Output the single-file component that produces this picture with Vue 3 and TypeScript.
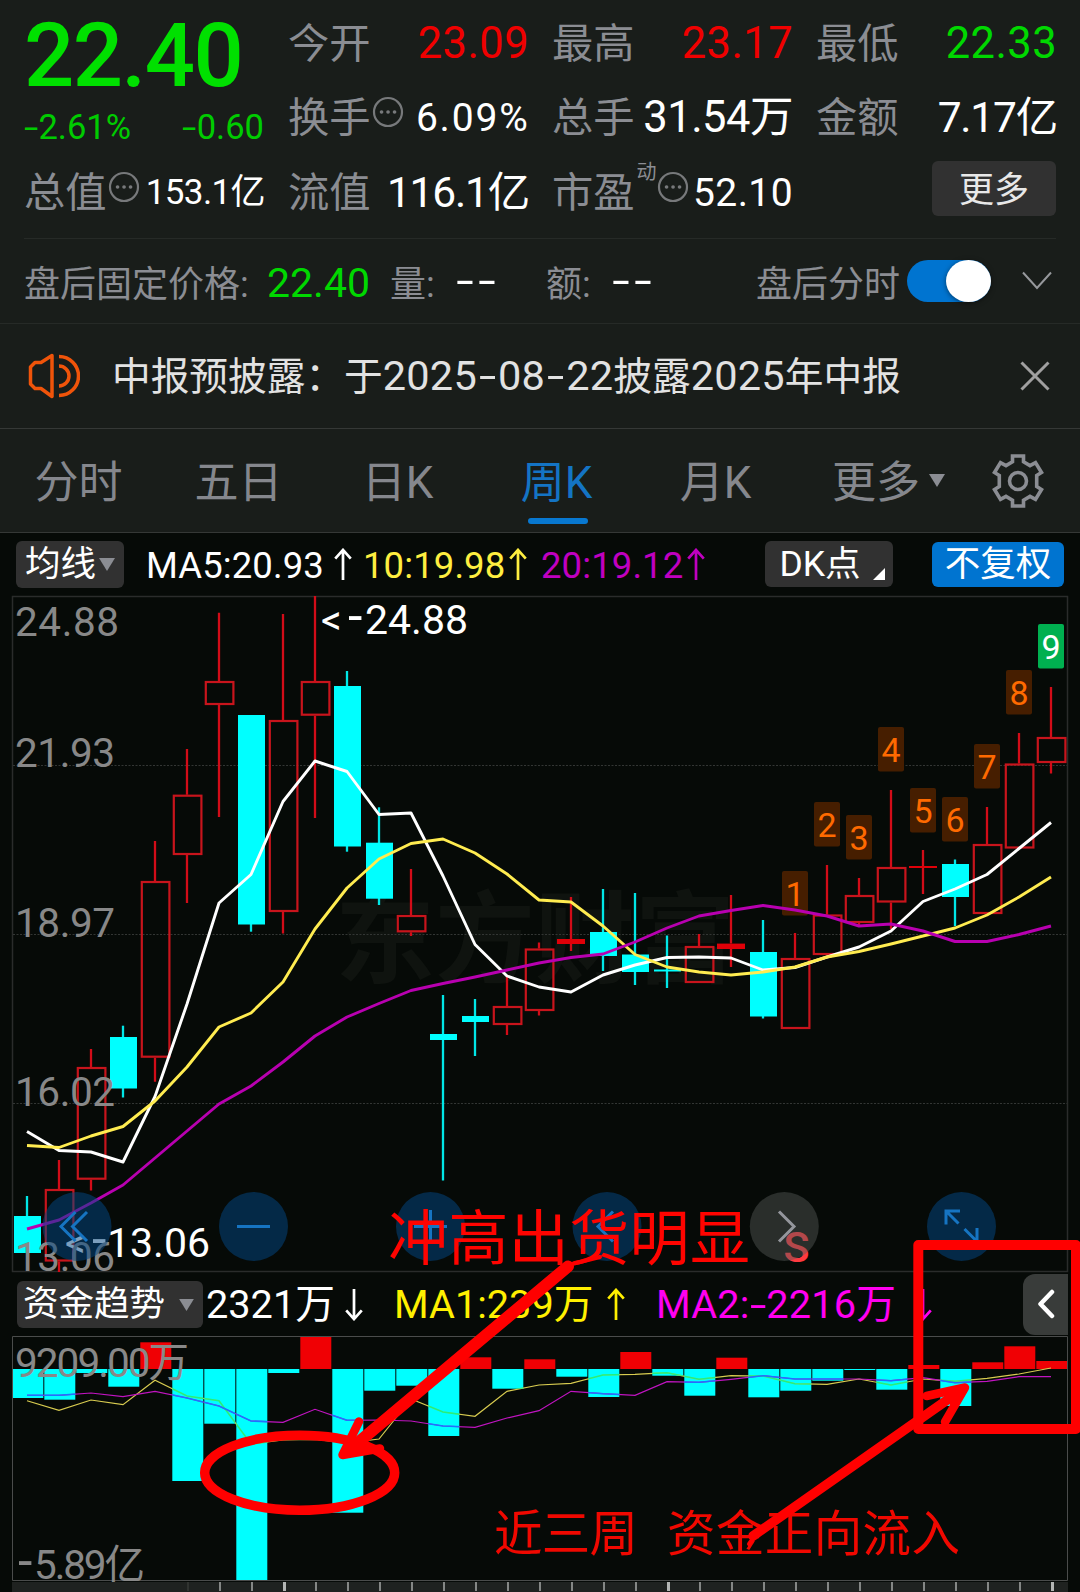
<script setup lang="ts">
interface Candle { up: boolean; high: number; top: number; bottom: number; low: number }

const cx = (i: number): number => 27 + 32 * i

const raw: [number, number, number, number, number][] = [
  [0, 1196, 1216, 1253, 1253], [1, 1160, 1189, 1261.5, 1272], [1, 1049, 1067, 1179.7, 1190.5],
  [0, 1025.7, 1037, 1088.5, 1097.5], [1, 841, 881, 1057.7, 1081.7], [1, 749, 794.7, 855, 903],
  [1, 612.7, 681, 705, 817], [0, 715, 715, 924.5, 931.7], [1, 614, 720, 912, 933.5],
  [1, 596, 681, 715.7, 818], [0, 671, 686, 846.5, 851.7], [0, 807.3, 842.7, 898.7, 905],
  [1, 869, 915, 932.3, 936], [0, 995, 1034, 1040, 1180.5], [0, 999, 1016, 1022, 1056],
  [1, 977, 1006, 1025, 1035], [1, 942.5, 948.5, 1011, 1015.5], [1, 897, 939, 944, 951],
  [0, 889, 932, 956, 971], [0, 893, 954.5, 972, 985], [0, 935.5, 969.5, 971.5, 988],
  [1, 934, 946, 983, 983], [1, 895, 943.6, 949, 967], [0, 920, 952, 1016.5, 1018.5],
  [1, 933, 958, 1029, 1029], [1, 865, 914.5, 955, 955], [1, 878, 895, 923, 925],
  [1, 790, 867, 902.5, 929], [1, 850, 866, 868, 894], [0, 859.5, 864, 897, 926],
  [1, 807, 844, 914, 914], [1, 733, 763.5, 848.5, 848.5], [1, 687, 737, 763, 773.5],
]
const candles: Candle[] = raw.map(([u, high, top, bottom, low]) => ({ up: u === 1, high, top, bottom, low }))

const toPoints = (ys: number[]): string => ys.map((y, i) => `${cx(i)},${y}`).join(' ')
const ma5 = toPoints([1131.5, 1150.5, 1152, 1162, 1096.5, 1004, 903, 874.5, 801.5, 761, 771.5, 814.5, 813, 876, 944.5, 976, 987, 992, 975, 965, 957.5, 957, 958, 970, 967.5, 957, 947, 931, 901.5, 889, 874.5, 848.5, 822.5])
const ma10 = toPoints([1145.5, 1147.5, 1136, 1126.5, 1101, 1067, 1027, 1013, 982, 929, 888, 859, 843.5, 839, 853, 874, 900, 902, 926, 954.5, 967, 972, 975, 972, 967, 957, 951.5, 944, 936, 928, 915, 897, 877])
const ma20 = toPoints([1229, 1220, 1203, 1185, 1158, 1131, 1104, 1086, 1062, 1036, 1017, 1003.5, 990.5, 983.5, 977, 970, 963, 957.5, 954, 942, 928, 916, 910.5, 905.5, 910, 916, 926, 924, 931, 941.5, 941.5, 934.5, 926])

const zero = 1369
const flows = [1398, 1399.7, 1373, 1386.7, 1342.3, 1481, 1423.7, 1580, 1373, 1336.5, 1512.7, 1390.7, 1385.7, 1436, 1357.3, 1388.7, 1359.3, 1376.7, 1397, 1352, 1375.7, 1395.7, 1357.7, 1397.3, 1390.7, 1380.7, 1370, 1389.7, 1365, 1406, 1362.3, 1346.3, 1361]
const bars = flows.map((end, i) => ({
  x: 12.3 + 32 * i, y: Math.min(zero, end), h: Math.abs(end - zero), up: end < zero,
}))
const flow1 = toPoints([1400.7, 1410.3, 1400, 1404.7, 1380.3, 1396, 1400.7, 1444, 1440, 1439.3, 1443, 1439, 1399, 1412, 1416.3, 1391.3, 1385, 1383.3, 1375, 1374.3, 1372.7, 1379.3, 1375.7, 1376, 1383.7, 1384.3, 1379, 1385, 1379, 1381.3, 1378.3, 1374, 1368])
const flow2 = toPoints([1395.3, 1395.3, 1393, 1396.7, 1391.3, 1398, 1406, 1421, 1422.3, 1409.3, 1420.3, 1420, 1421, 1426, 1427.3, 1418, 1410.7, 1391.3, 1393.7, 1395.3, 1381.7, 1382.3, 1379.3, 1375.7, 1379, 1379, 1379, 1380.7, 1377.7, 1382.7, 1381.3, 1376.7, 1376.7])

const marks = [871, 802, 815, 727, 788, 797, 744, 670, 624].map((y, k) => ({ n: k + 1, y, x: cx(24 + k) - 13 }))
const axis = [
  { t: '24.88', y: 636, w: 104 }, { t: '21.93', y: 766.5, w: 100 }, { t: '18.97', y: 936.5, w: 100 },
  { t: '16.02', y: 1105.5, w: 100 }, { t: '13.06', y: 1271, w: 100 },
]
const ticks = Array.from({ length: 28 }, (_, k) => {
  const i = k + 5
  return { x: 28 + 32 * i, major: i % 12 === 8, faint: i === 5 }
})
const buttons = [
  { x: 77, icon: 'M87 1212l-14.500 14.500l14.500 14.500M75.500 1212l-14.500 14.500l14.500 14.500' },
  { x: 253.500, icon: 'M237 1226.500h33' },
  { x: 430.500, icon: 'M414 1226.500h33M430.500 1210v33' },
  { x: 607, icon: 'M613 1211.500l-15 15l15 15' },
  { x: 961.500, icon: 'M946 1224.500v-13.500h14M947 1212l11.500 11.500M977 1228v13.500h-14M976 1240.500l-11.500 -11.500' },
]
</script>

<template>
  <main class="app">
    <section class="quote">
      <div class="lead">
        <div class="price">22.40</div>
        <div class="change"><span class="pct"><i class="hy">-</i>2.61%</span><span><i class="hy">-</i>0.60</span></div>
      </div>
      <div class="cell"><span class="label">今开</span><b class="red">23.09</b></div>
      <div class="cell"><span class="label">最高</span><b class="red">23.17</b></div>
      <div class="cell"><span class="label">最低</span><b class="green">22.33</b></div>
      <div class="cell">
        <span class="label">换手</span>
        <svg class="dots" viewBox="0 0 32 32"><circle cx="16" cy="16" r="14" /><path d="M9.500 16h.1M16 16h.1M22.500 16h.1" /></svg>
        <b class="mid rate">6.09%</b>
      </div>
      <div class="cell"><span class="label">总手</span><b class="lots">31.54万</b></div>
      <div class="cell"><span class="label">金额</span><b class="tight">7.17亿</b></div>
      <div class="cell">
        <span class="label">总值</span>
        <svg class="dots" viewBox="0 0 32 32"><circle cx="16" cy="16" r="14" /><path d="M9.500 16h.1M16 16h.1M22.500 16h.1" /></svg>
        <b class="small">153.1亿</b>
      </div>
      <div class="cell"><span class="label">流值</span><b class="tight">116.1亿</b></div>
      <div class="cell">
        <span class="label">市盈</span><sup>动</sup>
        <svg class="dots" viewBox="0 0 32 32"><circle cx="16" cy="16" r="14" /><path d="M9.500 16h.1M16 16h.1M22.500 16h.1" /></svg>
        <b class="mid">52.10</b>
      </div>
      <div class="cell end"><button class="more">更多</button></div>
    </section>

    <section class="after">
      <span class="fixed">盘后固定价格:</span><span class="fixed-price">22.40</span>
      <span class="vol">量:</span><span class="empty"><i class="hy">-</i><i class="hy">-</i></span>
      <span class="amt">额:</span><span class="empty"><i class="hy">-</i><i class="hy">-</i></span>
      <span class="switch-label">盘后分时</span>
      <span class="switch"><i /></span>
      <svg class="chev" width="30" height="20" viewBox="0 0 30 20"><path d="M1 1.500l14 15.500l14-15.500" /></svg>
    </section>

    <section class="notice">
      <svg class="horn" width="52" height="46" viewBox="0 0 52 46">
        <path d="M24 2.500L13 9.500H7L2.500 14V31L7 35.500H13L24 43.500Z" />
        <path d="M31 3.500A19.500 19.500 0 0 1 31 42.500M31 13A10 10 0 0 1 31 33" />
      </svg>
      <p>中报预披露：于<em>2025<i class="hy">-</i>08<i class="hy">-</i>22</em>披露<em>2025</em>年中报</p>
      <svg width="30" height="30" viewBox="0 0 30 30" class="close"><path d="M1.500 1.500l27 27M28.500 1.500l-27 27" /></svg>
    </section>

    <nav class="tabs">
      <span>分时</span><span>五日</span><span>日K</span><span class="on">周K</span><span>月K</span>
      <span class="tab-more">更多<svg width="16" height="13" viewBox="0 0 16 13"><path d="M0 0H16L8 13Z" /></svg></span>
      <svg class="gear" width="54" height="54" viewBox="0 0 54 54">
        <path d="M21.500 2H32.500V7.800L39 11.600L44.500 8.600L50.500 18.500L45.700 21.500V32.500L50.500 35.500L44.500 45.400L39 42.400L32.500 46.200V52H21.500V46.200L15 42.400L9.500 45.400L3.500 35.500L8.300 32.500V21.500L3.500 18.500L9.500 8.600L15 11.600L21.500 7.800Z" />
        <circle cx="27" cy="27" r="8.500" />
      </svg>
    </nav>

    <section class="charts">
      <div class="bar bar-ma">
        <button class="pill">均线<svg width="16" height="13" viewBox="0 0 16 13"><path d="M0 0H16L8 13Z" /></svg></button>
        <span class="ma w">MA5:20.93</span><svg class="arrow w" viewBox="0 0 18 34"><path d="M9 33V2M1 11L9 2L17 11" /></svg>
        <span class="ma y">10:19.98</span><svg class="arrow y" viewBox="0 0 18 34"><path d="M9 33V2M1 11L9 2L17 11" /></svg>
        <span class="ma p">20:19.12</span><svg class="arrow p" viewBox="0 0 18 34"><path d="M9 33V2M1 11L9 2L17 11" /></svg>
        <button class="pill dk">DK点<svg width="12" height="12" viewBox="0 0 12 12"><path d="M12 0V12H0Z" /></svg></button>
        <button class="pill blue">不复权</button>
      </div>

      <svg class="kline" width="1080" height="676" viewBox="0 596 1080 676">
        <text class="mark-bg" x="335" y="975" textLength="400">东方财富</text>
        <path class="frame" d="M12.500 596.500H1067.500V1271.500H12.500Z" />
        <path class="grid" d="M13 765.500H1067M13 934.500H1067M13 1103.500H1067" />
        <g v-for="(c, i) in candles" :key="i" :class="c.up ? 'up' : 'down'">
          <template v-if="c.up">
            <path :d="`M${cx(i)} ${c.high}V${c.top}M${cx(i)} ${c.bottom}V${c.low}`" />
            <rect v-if="c.bottom - c.top > 8" :x="cx(i) - 13.2" :y="c.top + 1" width="27.600" :height="c.bottom - c.top - 2" />
            <rect v-else class="solid" :x="cx(i) - 14" :y="c.top" width="28" :height="c.bottom - c.top" />
          </template>
          <template v-else>
            <path :d="`M${cx(i)} ${c.high}V${c.low}`" />
            <rect :x="cx(i) - 13" :y="c.top" width="27" :height="c.bottom - c.top" />
          </template>
        </g>
        <g v-for="m in marks" :key="m.n" :class="['mark', { nine: m.n === 9 }]">
          <rect :x="m.x" :y="m.y" width="26" height="44.500" rx="2" />
          <text :x="m.x + 13" :y="m.y + 34.5" text-anchor="middle">{{ m.n }}</text>
        </g>
        <polyline class="line white" :points="ma5" />
        <polyline class="line yellow" :points="ma10" />
        <polyline class="line purple" :points="ma20" />
        <text class="tip" y="634"><tspan x="321">&lt;</tspan><tspan x="348" class="wide-dash">-</tspan><tspan x="365">24.88</tspan></text>
        <text class="tip" y="1257"><tspan x="65">&lt;</tspan><tspan x="92" class="wide-dash">-</tspan><tspan x="107">13.06</tspan></text>
        <text v-for="a in axis" :key="a.t" class="axis" x="15" :y="a.y" :textLength="a.w">{{ a.t }}</text>
        <text class="sell" x="783.500" y="1262">S</text>
        <g v-for="b in buttons" :key="b.x" class="ctl">
          <circle :cx="b.x" cy="1226.500" r="34.500" />
          <path :d="b.icon" />
        </g>
        <g class="ctl off"><circle cx="784.300" cy="1226.500" r="34.500" /><path d="M779 1211.500l15 15l-15 15" /></g>
      </svg>

      <div class="bar bar-flow">
        <button class="pill wide">资金趋势<svg width="15" height="12" viewBox="0 0 16 13"><path d="M0 0H16L8 13Z" /></svg></button>
        <span class="fl w f0">2321万</span><svg class="arrow w" viewBox="0 0 18 34"><path d="M9 1V32M1 23L9 32L17 23" /></svg>
        <span class="fl yy f1">MA1:239万</span><svg class="arrow yy" viewBox="0 0 18 34"><path d="M9 33V2M1 11L9 2L17 11" /></svg>
        <span class="fl pp f2">MA2:<i class="hy">-</i>2216万</span><svg class="arrow pp last" viewBox="0 0 18 34"><path d="M9 1V32M1 23L9 32L17 23" /></svg>
        <button class="fold"><svg width="18" height="30" viewBox="0 0 18 30"><path d="M15 3L3.500 15L15 27" /></svg></button>
      </div>

      <svg class="flow" width="1080" height="256" viewBox="0 1336 1080 256">
        <defs>
          <clipPath id="neg"><rect v-for="(b, i) in bars.filter((v) => !v.up)" :key="i" :x="b.x" :y="b.y" width="31" :height="b.h" /></clipPath>
        </defs>
        <rect v-for="(b, i) in bars" :key="i" :class="b.up ? 'in' : 'out'" :x="b.x" :y="b.y" width="31" :height="b.h" />
        <path class="frame lit" d="M12.500 1336.500H1067.500V1580.500H12.500Z" />
        <polyline class="thin fy" :points="flow1" />
        <polyline class="thin fp" :points="flow2" />
        <g clip-path="url(#neg)">
          <polyline class="thin over-y" :points="flow1" />
          <polyline class="thin over-p" :points="flow2" />
        </g>
        <text class="axis" x="15" y="1377" textLength="174">9209.00万</text>
        <text class="axis" y="1579"><tspan x="18" class="wide-dash">-</tspan><tspan x="34" textLength="111">5.89亿</tspan></text>
        <rect class="strip" x="12" y="1582" width="1056" height="10" />
        <rect v-for="t in ticks" :key="t.x" :class="['tick', { major: t.major, faint: t.faint }]" :x="t.x - 1" y="1582" :width="t.major ? 3 : 2" height="9" />
      </svg>

      <svg class="notes" width="1080" height="1060" viewBox="0 532 1080 1060">
        <text class="note-a" x="388" y="1260" textLength="362">冲高出货明显</text>
        <text class="note-b" x="494" y="1551" textLength="144">近三周</text>
        <text class="note-b" x="667" y="1551" textLength="293">资金正向流入</text>
        <path class="pen thick" d="M568 1266.500L348 1451" />
        <path class="pen fine" d="M568 1265L600 1257" />
        <path class="pen head" d="M359 1421.500L342.500 1455L380 1448.500" />
        <path class="pen fine fill" d="M343 1454L352 1438L368 1449Z" />
        <ellipse class="pen" cx="299.700" cy="1472.700" rx="95" ry="37.500" />
        <path class="pen box" d="M918.300 1245H1076V1429H918.300Z" />
        <path class="pen" d="M753 1536L960 1391" />
        <path class="pen fine" d="M754 1537L749 1544" />
        <path class="pen head" d="M926.500 1396L965 1387.500L945 1422" />
        <path class="pen fine fill" d="M965 1389L946 1397L954 1406Z" />
      </svg>
    </section>
  </main>
</template>

<style>
body { background: #191d1a; }
</style>

<style scoped>
.app { width: 1080px; height: 1592px; overflow: hidden; background: #191d1a; color: #fff; font-family: Roboto, "Noto Sans CJK SC", sans-serif; }
.app * { box-sizing: border-box; }
button { border: 0; padding: 0; color: inherit; font-family: inherit; }
i { font-style: normal; }
.quote { height: 238px; padding: 7px 24px 0; display: grid; grid-template-columns: repeat(4, 240px); column-gap: 24px; grid-template-rows: 74px 74px 75px; }
.lead { grid-row: 1 / 3; display: flex; flex-direction: column; color: #00e000; }
.price { height: 94px; line-height: 98px; font-size: 88.500px; font-weight: 500; letter-spacing: -1.500px; margin-left: 0; }
.change { display: flex; justify-content: space-between; font-size: 34.500px; line-height: 52px; color: #0c0; white-space: nowrap; }
.hy { display: inline-block; width: .42em; text-align: center; transform: scaleX(1.5); letter-spacing: 0; }
.cell { display: flex; align-items: center; white-space: nowrap; position: relative; }
.label { font-size: 41.300px; color: #8b8d93; line-height: 74px; }
.cell b { margin-left: auto; font-weight: 400; font-size: 43.500px; line-height: 74px; letter-spacing: .4px; margin-right: -1px; }
.cell b.mid { font-size: 39px; }
.cell b.rate { letter-spacing: 1.800px; margin-right: -1.500px; }
.cell b.small { font-size: 35px; letter-spacing: -.6px; }
.cell b.tight { font-size: 42.500px; letter-spacing: -1.200px; }
.cell b.lots { letter-spacing: -.5px; }
.cell b.red { color: #f00000; }
.cell b.green { color: #00d800; }
.dots { width: 32px; height: 32px; margin: -12px 0 0 1px; flex: none; fill: none; stroke: #77797b; stroke-width: 2.200; stroke-linecap: round; }
.dots path { stroke-width: 3.600; }
sup { font-size: 20px; line-height: 20px; color: #8b8d93; margin: -41px -1px 0 2px; }
.more { margin-left: auto; margin-top: -8px; width: 124px; height: 55px; border-radius: 6px; background: #313131; color: #e8e8e8; font-size: 35px; line-height: 55px; padding-top: 2px; }
.after { height: 85px; position: relative; display: flex; align-items: center; padding: 5px 28px 0 24px; font-size: 36px; color: #8b8d93; white-space: nowrap; }
.after::before { content: ""; position: absolute; left: 24px; right: 24px; top: 0; height: 1px; background: #262a27; }
.fixed, .vol, .amt, .switch-label { padding-bottom: 5px; }
.fixed { width: 243px; }
.fixed-price { width: 122px; font-size: 41px; color: #00d800; }
.vol { width: 64px; margin-left: 1px; }
.amt { width: 64px; margin-left: 48px; }
.empty { display: flex; width: 44px; color: #fff; font-size: 42px; padding-bottom: 5px; }
.empty .hy { width: 22px; }
.switch-label { margin-left: 102px; width: 151px; }
.switch { flex: none; width: 84px; height: 42px; margin-top: -5px; border-radius: 21px; background: #0074d0; display: flex; justify-content: flex-end; }
.switch i { width: 45px; height: 42px; border-radius: 50%; background: #fff; box-shadow: 0 1px 5px rgba(0, 0, 0, .5); }
.chev { margin: -5px 0 0 auto; fill: none; stroke: #96989c; stroke-width: 2; }
.notice { height: 106px; border-top: 1px solid #262a27; border-bottom: 1px solid #353836; display: flex; align-items: center; padding: 0 30px 0 28px; }
.horn { fill: none; stroke: #f0540a; stroke-width: 3.500; stroke-linejoin: round; }
.notice p { margin: 0 auto 0 32px; font-size: 38.700px; line-height: 60px; color: #e2e2e2; white-space: nowrap; }
.notice em { font-style: normal; font-size: 41.500px; letter-spacing: .2px; }
.notice em .hy { width: .51em; }
.close { fill: none; stroke: #a0a0a0; stroke-width: 3; }
.tabs { height: 104px; border-bottom: 1px solid #353836; display: flex; align-items: center; font-size: 44px; color: #85878d; }
.tabs > span { width: 159px; height: 103px; line-height: 108px; text-align: center; position: relative; white-space: nowrap; }
.tabs > span:first-child { padding-right: 2px; }
.tabs .on { color: #1474c4; }
.tabs .on::after { content: ""; position: absolute; left: 51px; top: 89px; width: 60px; height: 6px; border-radius: 3px; background: #0878d0; }
.tabs .tab-more { width: 187px; padding-left: 0; }
.tab-more svg { margin-left: 9px; vertical-align: 11px; fill: #8b8d93; }
.gear { margin-left: 9px; fill: none; stroke: #8b8d93; stroke-width: 3.600; }
.charts { position: relative; background: #060a07; height: 1059px; }
.bar { display: flex; align-items: center; white-space: nowrap; position: relative; }
.bar-ma { height: 63px; padding: 0 16px; }
.pill { flex: none; width: 108px; height: 47px; margin-top: -1px; background: #313131; border-radius: 6px; font-size: 35.500px; line-height: 45px; display: flex; align-items: center; justify-content: center; color: #fff; }
.pill svg { fill: #8b8d93; margin-left: 3px; }
.ma { font-size: 36.500px; letter-spacing: .1px; padding-top: 1px; }
.ma.w { width: 188px; margin-left: 22px; }
.ma.y { width: 146px; margin-left: 11px; }
.ma.p { width: 146px; margin-left: 14px; }
.w { color: #fff; } .y { color: #ffee40; } .p { color: #c000c0; } .yy { color: #fff000; } .pp { color: #ff00f0; }
.arrow { flex: none; width: 18px; height: 33px; fill: none; stroke: currentColor; stroke-width: 2.800; }
.dk { margin-left: auto; width: 128px; padding-left: 6px; height: 46px; }
.dk svg { fill: #fff; margin: 20px 0 0 12px; }
.blue { width: 132px; height: 45px; margin-left: 39px; background: #0074d0; margin-right: 0; }
.kline, .flow { display: block; overflow: visible; }
.frame { fill: none; stroke: #2a2c2b; stroke-width: 1.500; }
.lit { stroke: #4a4c4b; stroke-width: 1; }
.grid { fill: none; stroke: #333634; stroke-width: 1; stroke-dasharray: 2 1.500; }
.mark-bg { font-size: 100px; font-weight: 700; fill: #0f130f; }
.up path { fill: none; stroke: #d20c18; stroke-width: 2.300; }
.up rect { fill: none; stroke: #c8141c; stroke-width: 2.200; }
.up .solid { fill: #e00008; stroke: none; }
.down path { stroke: #00e6e6; stroke-width: 2.300; }
.down rect { fill: #00ffff; }
.mark rect { fill: #461e00; }
.mark text { fill: #ff6a00; font-size: 34px; }
.nine rect { fill: #00b050; }
.mark.nine text { fill: #fff; }
.line { fill: none; stroke-width: 2.900; stroke-linejoin: round; }
.white { stroke: #fff; } .yellow { stroke: #ffec50; } .purple { stroke: #b800b0; }
.axis { font-size: 40.500px; fill: #888; }
.tip { font-size: 41px; fill: #fff; }
.wide-dash { font-size: 52px; }
.sell { fill: #ff3a40; font-size: 43px; font-weight: 500; }
.ctl circle { fill: #044682; fill-opacity: .52; }
.ctl path { fill: none; stroke: #1674c2; stroke-width: 3; }
.ctl.off circle { fill: #565a58; fill-opacity: .45; }
.ctl.off path { stroke: #94969c; }
.bar-flow { height: 64px; padding-left: 17px; }
.wide { width: 186px; margin-top: 1px; padding-right: 3px; }
.wide svg { margin-left: 14px; }
.fl { font-size: 39.700px; line-height: 60px; padding-top: 2px; }
.f0 { width: 142px; padding-left: 3px; }
.f1 { width: 213px; margin-left: 31px; }
.f2 { width: 258px; margin-left: 31px; letter-spacing: .2px; }
.fold { margin-left: auto; margin-right: 12px; width: 45px; height: 61px; border-radius: 12px 0 0 12px; background: #393c3a; display: flex; align-items: center; justify-content: center; }
.fold svg { fill: none; stroke: #fff; stroke-width: 4.500; stroke-linecap: round; stroke-linejoin: round; }
.in { fill: #f00004; }
.out { fill: #00ffff; }
.thin { fill: none; stroke-width: 1.200; }
.fy { stroke: #d8cc50; } .fp { stroke: #c014c0; } .over-y { stroke: #20f080; stroke-width: 1.600; } .over-p { stroke: #2070ff; stroke-width: 1.600; }
.strip { fill: #1f2220; }
.tick { fill: #858785; } .major { fill: #b4b6b4; } .faint { fill: #303330; }
.notes { position: absolute; left: 0; top: -1px; pointer-events: none; }
.note-a { font-size: 60px; fill: #ff0400; }
.note-b { font-size: 48.500px; fill: #f00800; }
.pen { fill: none; stroke: #f00; stroke-width: 9.500; stroke-linecap: round; stroke-linejoin: round; }
.thick { stroke-width: 12; }
.fine { stroke-width: 4; }
.head { stroke-width: 8.500; }
.fill { fill: #f00; }
.box { stroke-width: 10; }
</style>
